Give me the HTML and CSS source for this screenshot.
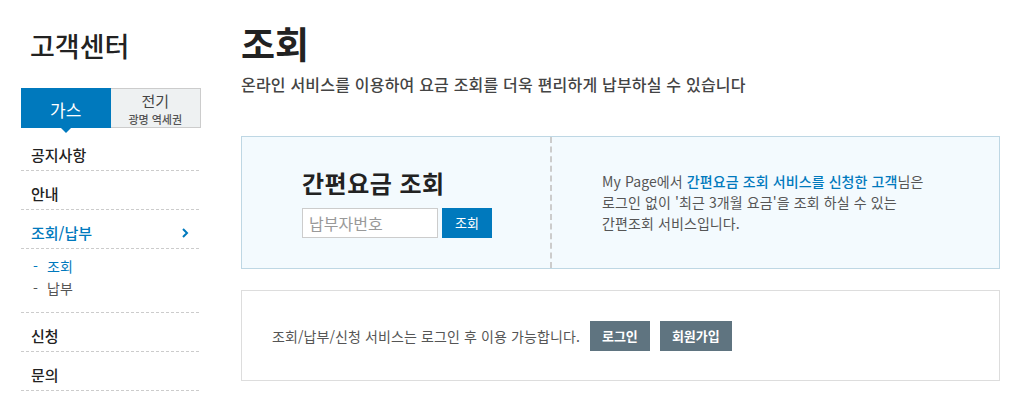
FILE: index.html
```html
<!DOCTYPE html>
<html lang="ko">
<head>
    <meta charset="utf-8">
    <title>조회 - 고객센터</title>
    <link rel="stylesheet" href="styles.css">
</head>
<body>
    <div class="page">
        <aside class="side">
            <h2 class="side-title">고객센터</h2>
            <div class="tabs">
                <a class="tab tab-on" href="#">가스</a>
                <a class="tab" href="#">전기<span class="tab-sub">광명 역세권</span></a>
            </div>
            <ul class="menu">
                <li class="menu-item">공지사항</li>
                <li class="menu-item">안내</li>
                <li class="menu-item menu-on">조회/납부
                    <svg class="chev" width="8" height="12" viewBox="0 0 8 12"><path d="M2 2l4 4-4 4" fill="none" stroke="#0079bd" stroke-width="2"/></svg>
                </li>
                <li class="sub">
                    <div class="sub-item sub-on"><span class="dash">-</span>조회</div>
                    <div class="sub-item"><span class="dash">-</span>납부</div>
                </li>
                <li class="menu-item">신청</li>
                <li class="menu-item">문의</li>
            </ul>
        </aside>

        <main class="content">
            <h1 class="page-title">조회</h1>
            <p class="page-desc">온라인 서비스를 이용하여 요금 조회를 더욱 편리하게 납부하실 수 있습니다</p>

            <div class="quick">
                <div class="quick-left">
                    <h3 class="quick-title">간편요금 조회</h3>
                    <div class="quick-form">
                        <input class="quick-input" type="text" placeholder="납부자번호">
                        <button class="btn-blue">조회</button>
                    </div>
                </div>
                <div class="quick-right">
                    <p>My Page에서 <strong>간편요금 조회 서비스를 신청한 고객</strong>님은<br>
                    로그인 없이 '최근 3개월 요금'을 조회 하실 수 있는<br>
                    간편조회 서비스입니다.</p>
                </div>
            </div>

            <div class="login-box">
                <span class="login-text">조회/납부/신청 서비스는 로그인 후 이용 가능합니다.</span>
                <button class="btn-gray">로그인</button>
                <button class="btn-gray">회원가입</button>
            </div>
        </main>
    </div>
</body>
</html>
```

FILE: styles.css
```css
body {
    margin: 0;
    background: #fff;
    color: #333;
    font-family: "Noto Sans CJK KR", "Noto Sans", sans-serif;
}

.page {
    display: flex;
    padding-left: 21px;
}

/* sidebar */
.side {
    width: 180px;
}

.side-title {
    margin: 28px 0 0 9px;
    height: 60px;
    font-size: 27px;
    font-weight: 500;
    line-height: 36px;
    color: #222;
}

.tabs {
    display: flex;
    height: 40px;
}

.tab {
    position: relative;
    flex: 1;
    display: flex;
    flex-direction: column;
    align-items: center;
    justify-content: center;
    text-decoration: none;
    font-size: 15px;
    line-height: 21px;
    color: #444;
    background: #eef1f2;
    border: 1px solid #ccc;
    border-left: none;
}

.tab-sub {
    font-size: 11px;
    line-height: 16px;
    font-weight: 500;
    color: #555;
}

.tab-on {
    padding-top: 3px;
    background: #0079bd;
    border: none;
    color: #fff;
    font-size: 17px;
}

.tab-on::after {
    content: "";
    position: absolute;
    left: 40px;
    bottom: -5px;
    border-left: 5px solid transparent;
    border-right: 5px solid transparent;
    border-top: 5px solid #0079bd;
}

.menu {
    list-style: none;
    margin: 4px 0 0;
    padding: 0;
    width: 178px;
}

.menu-item {
    display: flex;
    justify-content: space-between;
    align-items: center;
    padding: 13px 8px 5px 10px;
    line-height: 20px;
    font-size: 15px;
    font-weight: 500;
    color: #222;
    border-bottom: 1px dashed #ccc;
}

.menu-on {
    color: #0079bd;
}

.chev {
    margin-right: 2px;
}

.sub {
    padding: 6px 0 13px 12px;
    border-bottom: 1px dashed #ccc;
}

.sub-item {
    font-size: 14px;
    line-height: 22px;
    color: #555;
}

.dash {
    display: inline-block;
    width: 14px;
}

.sub-on {
    color: #0079bd;
}

/* content */
.content {
    margin-left: 40px;
    width: 759px;
}

.page-title {
    margin: 21px 0 0;
    font-size: 37px;
    line-height: 44px;
    font-weight: 700;
    color: #222;
}

.page-desc {
    margin: 8px 0 0;
    font-size: 16px;
    line-height: 22px;
    letter-spacing: 0.2px;
    font-weight: 500;
    color: #444;
}

.quick {
    display: flex;
    margin-top: 41px;
    height: 131px;
    background: #f3fafe;
    border: 1px solid #bed7e4;
}

.quick-left {
    width: 248px;
    padding: 0 0 0 60px;
    display: flex;
    flex-direction: column;
    justify-content: center;
    border-right: 2px dashed #ccc;
}

.quick-title {
    margin: 0 0 10px;
    font-size: 24px;
    line-height: 30px;
    letter-spacing: 0.5px;
    font-weight: 700;
    color: #222;
}

.quick-form {
    display: flex;
    gap: 4px;
}

.quick-input {
    box-sizing: border-box;
    width: 136px;
    height: 30px;
    padding: 0 6px;
    border: 1px solid #ccc;
    font-family: inherit;
    font-size: 16px;
    color: #333;
    outline: none;
}

.quick-input::placeholder {
    color: #999;
}

.btn-blue {
    width: 50px;
    height: 30px;
    border: none;
    background: #0079bd;
    color: #fff;
    font-family: inherit;
    font-size: 13px;
}

.quick-right {
    display: flex;
    align-items: center;
    padding-left: 50px;
}

.quick-right p {
    margin: 0;
    font-size: 14px;
    line-height: 21px;
    letter-spacing: 0.1px;
    color: #555;
}

.quick-right strong {
    font-weight: 500;
    color: #0079bd;
}

.login-box {
    display: flex;
    align-items: center;
    gap: 10px;
    margin-top: 21px;
    height: 89px;
    padding-left: 30px;
    border: 1px solid #ddd;
}

.login-text {
    font-size: 14px;
    letter-spacing: 0.1px;
    color: #555;
}

.btn-gray {
    height: 30px;
    padding: 0 12px;
    min-width: 60px;
    border: none;
    background: #5f7480;
    color: #fff;
    font-family: inherit;
    font-size: 13px;
    font-weight: 700;
}
```
